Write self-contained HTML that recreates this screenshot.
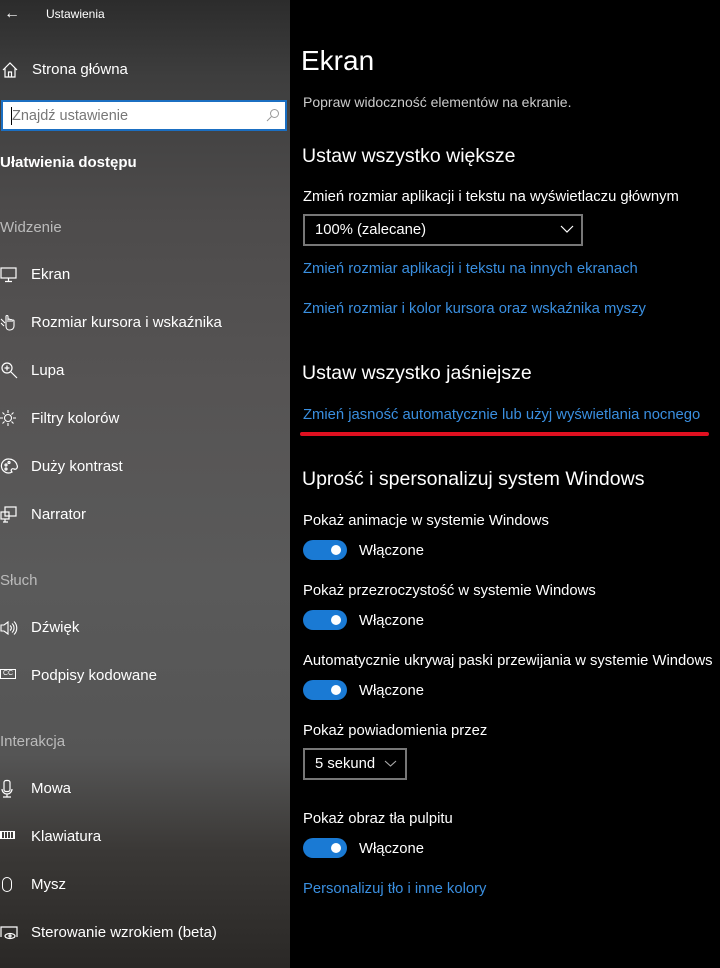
<!DOCTYPE html>
<html><head><meta charset="utf-8"><style>
*{margin:0;padding:0;box-sizing:border-box}
body{width:720px;height:968px;overflow:hidden;font-family:"Liberation Sans",sans-serif;background:#000;position:relative}
#side{position:absolute;left:0;top:0;width:290px;height:968px;background:linear-gradient(180deg,#2c2c2c 0%,#3e3e3e 8%,#4d4b4b 22%,#565454 40%,#5a5a5a 60%,#555 78%,#3a3836 88%,#2a2826 100%);color:#fff}
#side .t{position:absolute;font-size:15px;white-space:nowrap;margin-top:1px}
#side .ic{position:absolute;left:0;width:20px;height:20px}
#side .h{position:absolute;left:0;font-size:15px;color:#bbb;margin-top:1px}
#main{position:absolute;left:290px;top:0;width:430px;height:968px;color:#fff}
#main div{position:absolute;white-space:nowrap}
.lab{font-size:14.8px;left:13px;margin-top:1px}
.link{font-size:14.8px;left:13px;color:#3a8fe0;margin-top:1px}
.hd{font-size:19.5px;left:12px;margin-top:1px}
.tog{width:44px;height:20px;border-radius:10px;background:#1a7ad4;left:13px}
.tog::after{content:"";position:absolute;right:6px;top:5px;width:10px;height:10px;border-radius:5px;background:#fff}
.on{font-size:14.8px;left:69px;margin-top:1px}
</style></head><body>
<div id="side">
<div class="t" style="left:4px;top:4px;font-size:16px">&#8592;</div>
<div class="t" style="left:46px;top:6px;font-size:12px">Ustawienia</div>
<svg class="ic" style="top:60px" viewBox="0 0 20 20" fill="none" stroke="#fff" stroke-width="1.2"><path d="M3 10 L10 3 L17 10 M5 8 V17 H15 V8 M8.5 17 V12 H11.5 V17"/></svg>
<div class="t" style="left:32px;top:60px">Strona główna</div>
<div style="position:absolute;left:1px;top:100px;width:286px;height:31px;background:#fff;border:2px solid #1b6fc2"></div>
<div class="t" style="left:12px;top:107px;color:#777;font-size:14.5px">Znajdź ustawienie</div>
<div style="position:absolute;left:11px;top:107px;width:1px;height:18px;background:#000"></div>
<svg style="position:absolute;left:266px;top:108px" width="14" height="14" viewBox="0 0 14 14" fill="none" stroke="#999" stroke-width="1"><circle cx="8.5" cy="5.5" r="4"/><path d="M5.5 8.5L1 13"/></svg>
<div class="t" style="left:0;top:153px;font-weight:bold">Ułatwienia dostępu</div>
<div class="h" style="top:218px">Widzenie</div>
<svg class="ic" style="top:265px" viewBox="0 0 20 20" fill="none" stroke="#fff" stroke-width="1.2"><rect x="1" y="3" width="15" height="10"/><path d="M8.5 13v3M5 16.5h7"/></svg>
<div class="t" style="left:31px;top:265px">Ekran</div>
<svg class="ic" style="top:313px" viewBox="0 0 20 20" fill="none" stroke="#fff" stroke-width="1.1"><path d="M1 6l4 4M1 10l3 3M6 13V3.5a1 1 0 0 1 2 0V9M8 9V7a1 1 0 0 1 2 0v2M10 9V7.5a1 1 0 0 1 2 0V9M12 9V8a1 1 0 0 1 2 0v5c0 2-1.5 4-4 4H9c-2 0-3-2-3-4"/></svg>
<div class="t" style="left:31px;top:313px">Rozmiar kursora i wskaźnika</div>
<svg class="ic" style="top:361px" viewBox="0 0 20 20" fill="none" stroke="#fff" stroke-width="1.2"><circle cx="7" cy="7" r="5"/><path d="M11 11l6 6M7 4.5v5M4.5 7h5"/></svg>
<div class="t" style="left:31px;top:361px">Lupa</div>
<svg class="ic" style="top:409px" viewBox="0 0 20 20" fill="none" stroke="#fff" stroke-width="1.1"><circle cx="8" cy="9" r="3.5"/><path d="M8 1v3M8 14v3M0 9h3M13 9h3M2.5 3.5l2 2M11.5 12.5l2 2M2.5 14.5l2-2M11.5 5.5l2-2"/></svg>
<div class="t" style="left:31px;top:409px">Filtry kolorów</div>
<svg class="ic" style="top:457px" viewBox="0 0 20 20" fill="none" stroke="#fff" stroke-width="1.2"><path d="M9 2a7 7 0 1 0 3 13c-2-2 0-4 2-3 3 1 4-2 3-4-1-4-5-6-8-6z"/><circle cx="6" cy="8" r="1"/><circle cx="9" cy="5.5" r="1"/><circle cx="6" cy="12" r="1"/></svg>
<div class="t" style="left:31px;top:457px">Duży kontrast</div>
<svg class="ic" style="top:505px" viewBox="0 0 20 20" fill="none" stroke="#fff" stroke-width="1.2"><rect x="5" y="2" width="11" height="9"/><rect x="1" y="7" width="8" height="7"/><path d="M5 14v3M3 17h5"/></svg>
<div class="t" style="left:31px;top:505px">Narrator</div>
<div class="h" style="top:571px">Słuch</div>
<svg class="ic" style="top:618px" viewBox="0 0 20 20" fill="none" stroke="#fff" stroke-width="1.1"><path d="M1 7h3l4-3v12l-4-3H1z M10 7.5a3 3 0 0 1 0 5M12 5.5a6 6 0 0 1 0 9M14 3.5a9 9 0 0 1 0 13"/></svg>
<div class="t" style="left:31px;top:618px">Dźwięk</div>
<div style="position:absolute;left:0;top:669px;width:16px;height:10px;border:1px solid #fff;font-size:7px;line-height:8px;text-align:center">CC</div>
<div class="t" style="left:31px;top:666px">Podpisy kodowane</div>
<div class="h" style="top:732px">Interakcja</div>
<svg class="ic" style="top:779px" viewBox="0 0 20 20" fill="none" stroke="#fff" stroke-width="1.2"><rect x="4" y="1.5" width="6" height="11" rx="2"/><path d="M2 10a5 5 0 0 0 10 0M7 15v3M3 18h8"/></svg>
<div class="t" style="left:31px;top:779px">Mowa</div>
<div style="position:absolute;left:0;top:831px;width:15px;height:8px;border:1px solid #fff;background:repeating-linear-gradient(90deg,#fff 0 1px,transparent 1px 3px)"></div>
<div class="t" style="left:31px;top:827px">Klawiatura</div>
<div style="position:absolute;left:2px;top:877px;width:10px;height:15px;border:1.2px solid #fff;border-radius:5px"></div>
<div class="t" style="left:31px;top:875px">Mysz</div>
<svg class="ic" style="top:923px" viewBox="0 0 20 20" fill="none" stroke="#fff" stroke-width="1.2"><path d="M1 14V4h16v10"/><ellipse cx="10" cy="13" rx="5" ry="2.5"/><circle cx="10" cy="13" r="1"/></svg>
<div class="t" style="left:31px;top:923px">Sterowanie wzrokiem (beta)</div>
</div>
<div id="main">
<div style="left:11px;top:45px;font-size:28px">Ekran</div>
<div class="lab" style="top:93px;color:#ccc;font-size:14px">Popraw widoczność elementów na ekranie.</div>
<div class="hd" style="top:144px">Ustaw wszystko większe</div>
<div class="lab" style="top:188px">Zmień rozmiar aplikacji i tekstu na wyświetlaczu głównym</div>
<div style="left:13px;top:214px;width:280px;height:32px;border:2px solid #777"></div>
<div class="lab" style="left:25px;top:221px">100% (zalecane)</div>
<svg style="position:absolute;left:270px;top:225px" width="14" height="8" viewBox="0 0 14 8" fill="none" stroke="#fff" stroke-width="1.2"><path d="M1 1l6 6 6-6"/></svg>
<div class="link" style="top:260px">Zmień rozmiar aplikacji i tekstu na innych ekranach</div>
<div class="link" style="top:300px">Zmień rozmiar i kolor kursora oraz wskaźnika myszy</div>
<div class="hd" style="top:361px">Ustaw wszystko jaśniejsze</div>
<div class="link" style="top:406px">Zmień jasność automatycznie lub użyj wyświetlania nocnego</div>
<div style="left:10px;top:432px;width:409px;height:4px;background:#e01020;border-radius:2px"></div>
<div class="hd" style="top:467px">Uprość i spersonalizuj system Windows</div>
<div class="lab" style="top:512px">Pokaż animacje w systemie Windows</div>
<div class="tog" style="top:540px"></div><div class="on" style="top:542px">Włączone</div>
<div class="lab" style="top:582px">Pokaż przezroczystość w systemie Windows</div>
<div class="tog" style="top:610px"></div><div class="on" style="top:612px">Włączone</div>
<div class="lab" style="top:652px">Automatycznie ukrywaj paski przewijania w systemie Windows</div>
<div class="tog" style="top:680px"></div><div class="on" style="top:682px">Włączone</div>
<div class="lab" style="top:722px">Pokaż powiadomienia przez</div>
<div style="left:13px;top:748px;width:104px;height:32px;border:2px solid #777"></div>
<div class="lab" style="left:25px;top:755px">5 sekund</div>
<svg style="position:absolute;left:94px;top:760px" width="13" height="7" viewBox="0 0 13 7" fill="none" stroke="#aaa" stroke-width="1.1"><path d="M1 1l5.5 5 5.5-5"/></svg>
<div class="lab" style="top:810px">Pokaż obraz tła pulpitu</div>
<div class="tog" style="top:838px"></div><div class="on" style="top:840px">Włączone</div>
<div class="link" style="top:880px">Personalizuj tło i inne kolory</div>
</div>
</body></html>
